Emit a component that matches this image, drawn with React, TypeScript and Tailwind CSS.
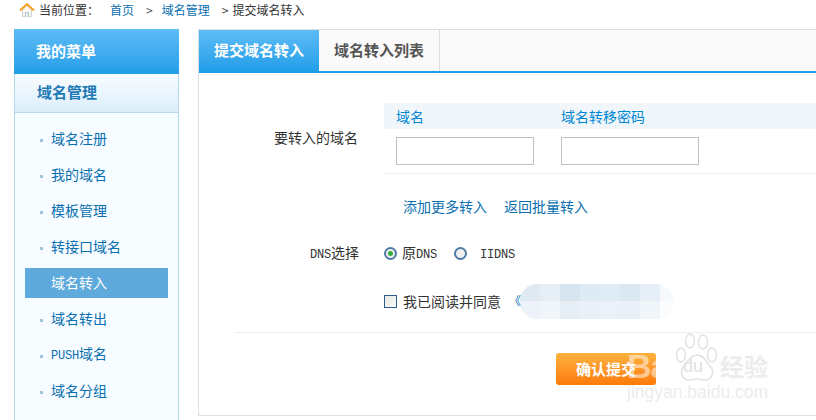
const sans = "font-['Noto_Sans_CJK_SC','Liberation_Sans',sans-serif]";
const mono = "font-['Liberation_Mono',monospace] text-[12px] tracking-[-0.2px]";

const menu = ["域名注册", "我的域名", "模板管理", "转接口域名", "域名转入", "域名转出", "PUSH域名", "域名分组"];

const blurTop = ["#dfeaf3", "#e6eff6", "#d6e5f0", "#deeaf4", "#e0ecf5", "#dbe8f2", "#e6eff7", "#f5f9fd"];
const blurBottom = ["#edf3f9", "#f0f5fa", "#e6eef6", "#e9f0f7", "#ebf1f8", "#e9f0f7", "#f0f5fa", "#fafcfe"];

function House() {
  return (
    <svg width="16" height="16" viewBox="0 0 16 16" className="shrink-0">
      <path d="M3.5 8v6.5h9V8L8 3.5Z" fill="#fff8ea" stroke="#c9d6dc" strokeWidth="1" />
      <path d="M6.5 14.5V10.5h3v4" fill="#eef6fa" stroke="#a9c6d4" strokeWidth="1" />
      <path d="M1 8.5 8 2l7 6.5" fill="none" stroke="#f7a11c" strokeWidth="2" />
    </svg>
  );
}

function Radio({ on }: { on?: boolean }) {
  return (
    <span className="w-[13px] h-[13px] rounded-full border-2 border-[#4f7ba6] bg-[#eef0ee] flex items-center justify-center shrink-0">
      {on && <span className="w-[5px] h-[5px] rounded-full bg-[#2fae3a]" />}
    </span>
  );
}

function BlurRow({ colors }: { colors: string[] }) {
  return (
    <div className="flex h-1/2">
      {colors.map((c, i) => (
        <span key={i} className="w-[20px] shrink-0" style={{ backgroundColor: c }} />
      ))}
    </div>
  );
}

function Watermark() {
  return (
    <div className="absolute left-[627px] top-[333px] w-[145px] h-[70px] pointer-events-none">
      <span className="absolute left-0 top-[16px] font-['Liberation_Sans',sans-serif] text-[34px] font-bold leading-none text-white/50 whitespace-nowrap tracking-[-1px]">Bai</span>
      <svg width="46" height="50" viewBox="0 0 46 50" className="absolute left-[47px] top-0">
        <g fill="#fff" fillOpacity="0.6" stroke="#e2e2e2" strokeWidth="1.5">
          <ellipse cx="7" cy="22" rx="4.5" ry="7" />
          <ellipse cx="16" cy="8" rx="4.5" ry="7" />
          <ellipse cx="29" cy="9" rx="4.5" ry="7" />
          <ellipse cx="38" cy="22" rx="4.5" ry="7" />
          <path d="M23 22c-7 0-9 7-13 11-5 5-2 15 6 14 3-.4 5-1 7-1s4 .6 7 1c8 1 11-9 6-14-4-4-6-11-13-11Z" />
        </g>
      </svg>
      <span className="absolute left-[56px] top-[24px] font-['Liberation_Sans',sans-serif] text-[18px] leading-none text-[#e0e0e0] whitespace-nowrap">du</span>
      <span className={`absolute left-[93px] top-[21px] text-[24px] leading-none font-bold whitespace-nowrap text-[#ececec] ${sans}`}>经验</span>
      <span className="absolute left-0 top-[51px] font-['Liberation_Sans',sans-serif] text-[17.5px] leading-none text-[#ececec] whitespace-nowrap">jingyan.baidu.com</span>
    </div>
  );
}

export default function App() {
  return (
    <div className={`relative w-[816px] h-[420px] overflow-hidden bg-white text-[14px] text-[#333] ${sans}`}>
      <div className="h-[29px] pl-[19px] flex items-start pt-[2px] text-[12px] leading-[16px]">
        <House />
        <span className="ml-[4px] text-[#333]">当前位置：</span>
        <span className="ml-[11px] text-[#0a6fb0]">首页</span>
        <span className="ml-[12px] text-[#555]">&gt;</span>
        <span className="ml-[9px] text-[#0a6fb0]">域名管理</span>
        <span className="ml-[12px] text-[#444]">&gt;</span>
        <span className="ml-[4px] text-[#333]">提交域名转入</span>
      </div>

      <div className="flex items-start">
        <aside className="ml-[14px] w-[165px] shrink-0">
          <div className="h-[45px] bg-gradient-to-b from-[#5cbcf6] to-[#1f9ee8] pl-[22px] flex items-center text-white font-bold text-[15px]">
            我的菜单
          </div>
          <div className="h-[39px] bg-gradient-to-b from-[#f9fdff] to-[#dbeefb] border-x border-b border-[#b5d9ee] pl-[22px] pb-[2px] flex items-center text-[#1f7ab5] font-bold text-[15px]">
            域名管理
          </div>
          <ul className="h-[307px] bg-[#f6fcff] border-x border-[#b5d9ee] px-[10px] pt-[11px] flex flex-col gap-[6px]">
            {menu.map((m) => {
              const active = m === "域名转入";
              return (
                <li
                  key={m}
                  className={`h-[30px] shrink-0 pl-[26px] pb-[2px] flex items-center text-[14px] relative ${active ? "bg-[#5faadd] text-white" : "text-[#0a6fb0]"}`}
                >
                  {!active && <span className="absolute left-[15px] top-[15px] w-[3px] h-[3px] bg-[#9fc2da]" />}
                  <span>
                    {m === "PUSH域名" ? (
                      <>
                        <span className={mono}>PUSH</span>域名
                      </>
                    ) : (
                      m
                    )}
                  </span>
                </li>
              );
            })}
          </ul>
        </aside>

        <main className="ml-[19px] flex-1 min-w-0 h-[387px] border-l border-b border-t border-[#dcdfe1]">
          <div className="h-[43px] flex bg-[#fafafa] border-b-2 border-[#1f9ee8]">
            <div className="w-[120px] bg-gradient-to-b from-[#5cbcf6] to-[#1f9ee8] flex items-center pl-[15px] text-white font-bold text-[15px]">
              提交域名转入
            </div>
            <div className="w-[121px] border-r border-[#dcdfe1] flex items-center justify-center text-[#555] font-bold text-[15px]">
              域名转入列表
            </div>
          </div>

          <div className="flex pt-[30px]">
            <div className="w-[185px] shrink-0 text-right pr-[26px] pt-[26px] text-[14px] leading-[16px]">要转入的域名</div>
            <div className="flex-1">
              <div className="h-[26px] bg-[#f1f6fa] flex items-center pl-[12px] text-[#0088d6] text-[14px]">
                <span className="w-[165px]">域名</span>
                <span>域名转移密码</span>
              </div>
              <div className="h-[45px] flex items-start pt-[8px] pl-[12px] gap-[27px] border-b border-[#eeeeee]">
                <div className="w-[138px] h-[28px] border border-[#c0c0c0] bg-white" />
                <div className="w-[138px] h-[28px] border border-[#c0c0c0] bg-white" />
              </div>
              <div className="pt-[24px] pl-[19px] flex gap-[17px] text-[#0a6fb0] text-[14px] leading-[16px]">
                <span>添加更多转入</span>
                <span>返回批量转入</span>
              </div>
            </div>
          </div>

          <div className="flex mt-[31px] items-center h-[16px]">
            <div className="w-[160px] shrink-0 text-right text-[14px] leading-[16px] text-[#333]">
              <span className={mono}>DNS</span>选择
            </div>
            <div className="ml-[25px] flex items-center">
              <Radio on />
              <span className="ml-[5px] text-[14px] text-[#333]">
                原<span className={mono}>DNS</span>
              </span>
              <span className="ml-[17px]"><Radio /></span>
              <span className={`ml-[13px] mt-[4px] text-[#333] ${mono}`}>IIDNS</span>
            </div>
          </div>

          <div className="flex items-center h-[20px] mt-[30px] pl-[185px]">
            <span className="w-[13px] h-[13px] border border-[#2d5d8c] bg-gradient-to-br from-[#e6e6e0] to-[#fafafa] shrink-0" />
            <span className="ml-[6px] text-[14px] text-[#333]">我已阅读并同意</span>
            <span className="ml-[8px] w-[11px] relative z-10 text-[#0a6fb0] text-[12px] leading-none whitespace-nowrap">《</span>
            <div className="h-[35px] w-[153px] shrink-0 rounded-[17px] overflow-hidden">
              <BlurRow colors={blurTop} />
              <BlurRow colors={blurBottom} />
            </div>
          </div>

          <div className="mt-[21px] ml-[36px] border-t border-[#eeeeee]" />

          <div className="mt-[20px] ml-[357px] w-[100px] h-[32px] rounded-[3px] bg-gradient-to-b from-[#fdb13c] to-[#fc7a05] text-white font-bold text-[15px] flex items-center pl-[20px]">
            确认提交
          </div>
        </main>
      </div>
      <Watermark />
    </div>
  );
}
